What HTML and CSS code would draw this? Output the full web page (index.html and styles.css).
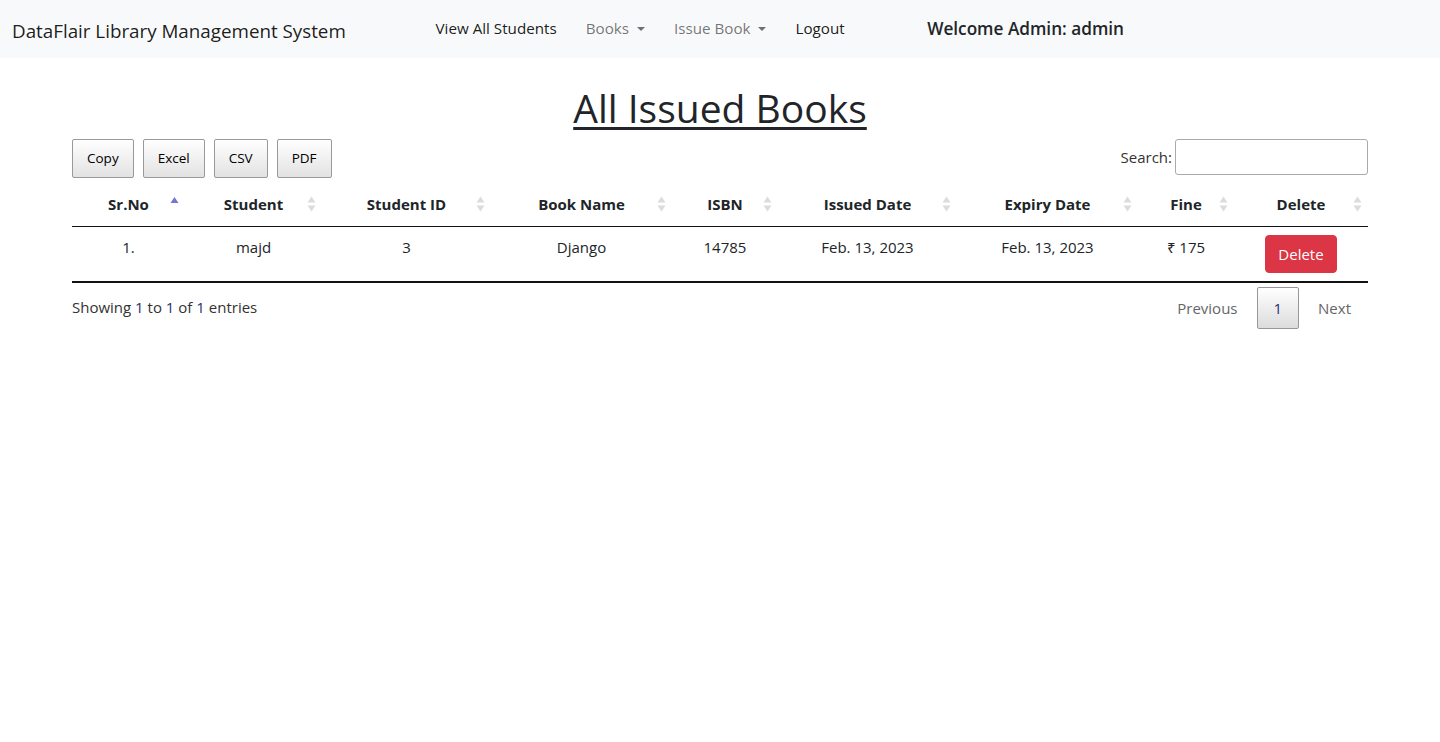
FILE: index.html
```html
<!DOCTYPE html>
<html lang="en">
<head>
<meta charset="utf-8">
<title>All Issued Books</title>
<link rel="stylesheet" href="styles.css">
</head>
<body>
<nav class="navbar">
  <a class="brand" href="#">DataFlair Library Management System</a>
  <ul class="nav-links">
    <li><a class="nav-link active" href="#">View All Students</a></li>
    <li><a class="nav-link muted" href="#">Books <span class="caret"></span></a></li>
    <li><a class="nav-link muted" href="#">Issue Book <span class="caret"></span></a></li>
    <li><a class="nav-link active" href="#">Logout</a></li>
  </ul>
  <div class="welcome">Welcome Admin: admin</div>
</nav>

<main class="container">
  <h1 class="page-title">All Issued Books</h1>

  <div class="dt-top">
    <div class="dt-buttons">
      <button class="dt-button">Copy</button>
      <button class="dt-button">Excel</button>
      <button class="dt-button">CSV</button>
      <button class="dt-button">PDF</button>
    </div>
    <label class="dt-search">Search:<input type="search" class="search-input"></label>
  </div>

  <table class="data-table">
    <colgroup>
      <col class="c1"><col class="c2"><col class="c3"><col class="c4"><col class="c5"><col class="c6"><col class="c7"><col class="c8"><col class="c9">
    </colgroup>
    <thead>
      <tr>
        <th class="sort-asc">Sr.No<svg class="sort-icon" width="9" height="16" viewBox="0 0 9 16"><path d="M0.5 7 L4.5 1 L8.5 7 Z" fill="#7476d6"/></svg></th>
        <th class="sorting">Student<svg class="sort-icon" width="9" height="16" viewBox="0 0 9 16"><path d="M0.5 6.5 L4.5 0.5 L8.5 6.5 Z M0.5 9.5 L8.5 9.5 L4.5 15.5 Z" fill="#dcdcdc"/></svg></th>
        <th class="sorting">Student ID<svg class="sort-icon" width="9" height="16" viewBox="0 0 9 16"><path d="M0.5 6.5 L4.5 0.5 L8.5 6.5 Z M0.5 9.5 L8.5 9.5 L4.5 15.5 Z" fill="#dcdcdc"/></svg></th>
        <th class="sorting">Book Name<svg class="sort-icon" width="9" height="16" viewBox="0 0 9 16"><path d="M0.5 6.5 L4.5 0.5 L8.5 6.5 Z M0.5 9.5 L8.5 9.5 L4.5 15.5 Z" fill="#dcdcdc"/></svg></th>
        <th class="sorting">ISBN<svg class="sort-icon" width="9" height="16" viewBox="0 0 9 16"><path d="M0.5 6.5 L4.5 0.5 L8.5 6.5 Z M0.5 9.5 L8.5 9.5 L4.5 15.5 Z" fill="#dcdcdc"/></svg></th>
        <th class="sorting">Issued Date<svg class="sort-icon" width="9" height="16" viewBox="0 0 9 16"><path d="M0.5 6.5 L4.5 0.5 L8.5 6.5 Z M0.5 9.5 L8.5 9.5 L4.5 15.5 Z" fill="#dcdcdc"/></svg></th>
        <th class="sorting">Expiry Date<svg class="sort-icon" width="9" height="16" viewBox="0 0 9 16"><path d="M0.5 6.5 L4.5 0.5 L8.5 6.5 Z M0.5 9.5 L8.5 9.5 L4.5 15.5 Z" fill="#dcdcdc"/></svg></th>
        <th class="sorting">Fine<svg class="sort-icon" width="9" height="16" viewBox="0 0 9 16"><path d="M0.5 6.5 L4.5 0.5 L8.5 6.5 Z M0.5 9.5 L8.5 9.5 L4.5 15.5 Z" fill="#dcdcdc"/></svg></th>
        <th class="sorting">Delete<svg class="sort-icon" width="9" height="16" viewBox="0 0 9 16"><path d="M0.5 6.5 L4.5 0.5 L8.5 6.5 Z M0.5 9.5 L8.5 9.5 L4.5 15.5 Z" fill="#dcdcdc"/></svg></th>
      </tr>
    </thead>
    <tbody>
      <tr>
        <td>1.</td>
        <td>majd</td>
        <td>3</td>
        <td>Django</td>
        <td>14785</td>
        <td>Feb. 13, 2023</td>
        <td>Feb. 13, 2023</td>
        <td>₹ 175</td>
        <td class="action-cell"><button class="btn-danger">Delete</button></td>
      </tr>
    </tbody>
  </table>

  <div class="dt-bottom">
    <div class="dt-info">Showing <span class="num">1</span> to <span class="num">1</span> of <span class="num">1</span> entries</div>
    <div class="dt-paging">
      <a class="page-btn disabled" href="#">Previous</a>
      <a class="page-btn current" href="#">1</a>
      <a class="page-btn disabled" href="#">Next</a>
    </div>
  </div>
</main>
</body>
</html>
```

FILE: styles.css
```css
* { box-sizing: border-box; }

body {
  margin: 0;
  font-family: "Open Sans", "Noto Sans", "Liberation Sans", sans-serif;
  font-size: 15px;
  line-height: 1.5;
  color: #212529;
  background: #fff;
}

a { text-decoration: none; }

/* Navbar */
.navbar {
  display: flex;
  align-items: center;
  height: 58px;
  padding: 0 12px;
  background: #f8f9fa;
}
.brand {
  flex: 0 0 409px;
  font-size: 18.8px;
  color: rgba(0, 0, 0, 0.9);
  padding-top: 4px;
  white-space: nowrap;
}
.nav-links {
  display: flex;
  list-style: none;
  margin: 0;
  padding: 0;
}
.nav-link {
  display: block;
  padding: 0 14.5px 2px;
  white-space: nowrap;
  font-size: 15.2px;
}
.nav-link.active { color: rgba(0, 0, 0, 0.9); }
.nav-link.muted { color: rgba(0, 0, 0, 0.55); }
.caret {
  display: inline-block;
  margin-left: 4px;
  vertical-align: 3px;
  border-top: 4.5px solid;
  border-left: 4.5px solid transparent;
  border-right: 4.5px solid transparent;
}
.welcome {
  margin-left: 68px;
  font-size: 17.2px;
  font-weight: 600;
  color: #212529;
  white-space: nowrap;
}

/* Main */
.container {
  width: 1296px;
  margin: 0 auto;
}
.page-title {
  margin: 27px 0 7px;
  text-align: center;
  font-size: 39px;
  font-weight: 500;
  line-height: 1.2;
  text-decoration: underline;
  text-decoration-thickness: 3px;
  text-underline-offset: 4px;
}

.dt-top {
  display: flex;
  justify-content: space-between;
  align-items: flex-start;
}
.dt-buttons {
  display: flex;
  gap: 9px;
}
.dt-button {
  font-family: inherit;
  font-size: 13.5px;
  line-height: 23px;
  padding: 7px 14px;
  color: #000;
  border: 1px solid #999;
  border-radius: 2px;
  background: linear-gradient(to bottom, #fff 0%, #e2e2e2 100%);
  cursor: pointer;
}
.dt-search {
  display: flex;
  align-items: center;
  gap: 3px;
  color: #333;
}
.search-input {
  width: 193px;
  height: 36px;
  border: 1px solid #aaa;
  border-radius: 3px;
  padding: 5px;
  font: inherit;
}

/* Table */
.data-table {
  width: 100%;
  margin-top: 7px;
  border-collapse: separate;
  border-spacing: 0;
  table-layout: fixed;
  border-bottom: 2px solid #111;
}
.c1 { width: 113px; }
.c2 { width: 137px; }
.c3 { width: 169px; }
.c4 { width: 181px; }
.c5 { width: 106px; }
.c6 { width: 179px; }
.c7 { width: 181px; }
.c8 { width: 96px; }
.c9 { width: 134px; }

.data-table th {
  position: relative;
  padding: 8px 10px 11px;
  font-weight: 700;
  text-align: center;
  border-bottom: 1px solid #111;
  white-space: nowrap;
}
.sort-icon {
  position: absolute;
  right: 6px;
  top: 11px;
}
.data-table td {
  padding: 9px 10px 7px;
  text-align: center;
  vertical-align: top;
}
.data-table td.action-cell {
  padding-top: 8px;
  padding-bottom: 8px;
}
.btn-danger {
  font-family: inherit;
  font-size: 15px;
  line-height: 24px;
  padding: 6px 12px;
  color: #fff;
  background: #dc3545;
  border: 1px solid #dc3545;
  border-radius: 4px;
  cursor: pointer;
}

.dt-bottom {
  display: flex;
  justify-content: space-between;
  align-items: flex-start;
}
.dt-info {
  padding-top: 13px;
  color: #333;
}
.dt-info .num { color: #2a2f6e; }
.dt-paging {
  display: flex;
  padding-top: 4px;
}
.page-btn {
  min-width: 24px;
  padding: 8px 16px;
  margin-left: 2px;
  line-height: 24px;
  text-align: center;
  border: 1px solid transparent;
  border-radius: 2px;
  color: #666;
}
.page-btn.current {
  color: #2a2f6e;
  border-color: #979797;
  background: linear-gradient(to bottom, #fff 0%, #dcdcdc 100%);
}
```
